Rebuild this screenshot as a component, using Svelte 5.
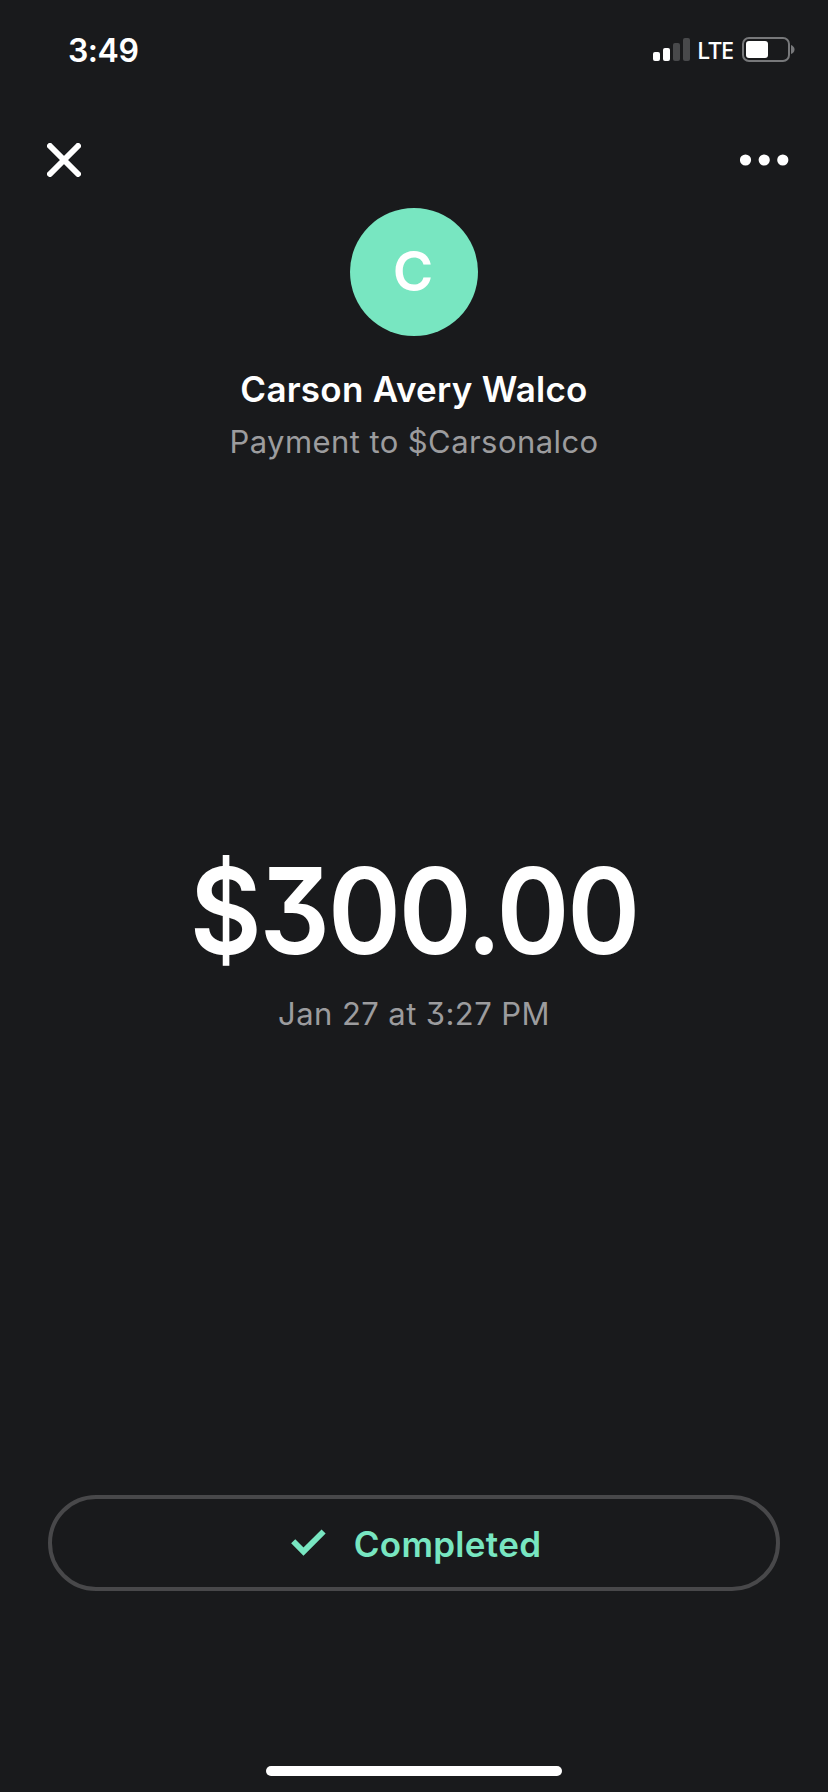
<script lang="ts">
	const status = { time: '3:49', network: 'LTE', battery: 0.55 };

	const payment = {
		name: 'Carson Avery Walco',
		detail: 'Payment to $Carsonalco',
		amount: '$300.00',
		date: 'Jan 27 at 3:27 PM',
		state: 'Completed'
	};

	const bars = [
		{ height: 9, active: true },
		{ height: 13, active: true },
		{ height: 18, active: false },
		{ height: 23, active: false }
	];

	let initial = $derived(payment.name.charAt(0));
</script>

<div class="screen">
	<div class="status-bar">
		<span class="time">{status.time}</span>
		<div class="indicators">
			<div class="signal">
				{#each bars as bar}
					<span class="bar" class:active={bar.active} style="height: {bar.height}px"></span>
				{/each}
			</div>
			<span class="network">{status.network}</span>
			<div class="battery">
				<div class="cell">
					<div class="charge" style="width: {status.battery * 100}%"></div>
				</div>
				<svg width="4" height="9" viewBox="0 0 4 9" aria-hidden="true">
					<path d="M0 0Q3.5 1.5 3.5 4.5T0 9Z" fill="#77787a" />
				</svg>
			</div>
		</div>
	</div>

	<nav>
		<button aria-label="Close">
			<svg width="34" height="34" viewBox="0 0 34 34">
				<path d="M3 3L31 31M31 3L3 31" fill="none" stroke="#fff" stroke-width="6" stroke-linecap="round" />
			</svg>
		</button>
		<button aria-label="More options">
			<svg width="49" height="12" viewBox="0 0 49 12" fill="#fff">
				<circle cx="5.5" cy="6" r="5.6" />
				<circle cx="24.2" cy="6" r="5.6" />
				<circle cx="42.8" cy="6" r="5.6" />
			</svg>
		</button>
	</nav>

	<header class="profile">
		<div class="avatar">{initial}</div>
		<h1>{payment.name}</h1>
		<p>{payment.detail}</p>
	</header>

	<main>
		<div class="amount">{payment.amount}</div>
		<p class="date">{payment.date}</p>
	</main>

	<footer>
		<div class="state">
			<svg width="36" height="28" viewBox="0 0 36 28" aria-hidden="true">
				<path d="M2.2 12.3L12.5 22.6L32.6 2.5" fill="none" stroke="#78e6c1" stroke-width="5.8" />
			</svg>
			<span>{payment.state}</span>
		</div>
		<div class="home-indicator"></div>
	</footer>
</div>

<style>
	:global(body) {
		margin: 0;
		background: #191a1c;
	}

	.screen {
		display: flex;
		flex-direction: column;
		box-sizing: border-box;
		width: 828px;
		height: 1792px;
		overflow: hidden;
		background: #191a1c;
		color: #fff;
		font-family: Inter, 'Open Sans', sans-serif;
	}

	.status-bar {
		display: flex;
		align-items: center;
		justify-content: space-between;
		height: 99px;
		padding: 0 33px 0 68px;
	}

	.time {
		padding-top: 1px;
		font-size: 32px;
		font-weight: 600;
		letter-spacing: -0.5px;
	}

	.indicators {
		display: flex;
		align-items: center;
	}

	.signal {
		display: flex;
		align-items: flex-end;
		gap: 3px;
		height: 23px;
	}

	.bar {
		width: 7px;
		border-radius: 2px;
		background: #48494b;
	}

	.bar.active {
		background: #fff;
	}

	.network {
		margin: 1px 9px 0 7px;
		font-family: 'Noto Sans', sans-serif;
		font-size: 24px;
		font-weight: 500;
		line-height: 24px;
		letter-spacing: -1.1px;
	}

	.battery {
		display: flex;
		align-items: center;
		gap: 1px;
	}

	.cell {
		box-sizing: border-box;
		width: 48px;
		height: 25px;
		padding: 2px;
		border: 2px solid #77787a;
		border-radius: 7px;
	}

	.charge {
		height: 17px;
		border-radius: 3px;
		background: #fff;
	}

	nav {
		display: flex;
		align-items: center;
		justify-content: space-between;
		padding: 44px 39px 0 47px;
	}

	button {
		display: flex;
		padding: 0;
		border: 0;
		background: none;
	}

	.profile {
		display: flex;
		flex-direction: column;
		align-items: center;
		margin-top: 31px;
	}

	.avatar {
		width: 128px;
		height: 128px;
		border-radius: 50%;
		background: #78e6c1;
		font-size: 55px;
		font-weight: 600;
		line-height: 126px;
		text-align: center;
		text-indent: -2px;
	}

	h1,
	p {
		margin: 0;
		white-space: nowrap;
	}

	h1 {
		margin-top: 31px;
		font-size: 35px;
		font-weight: 600;
		line-height: 44px;
		letter-spacing: 0.25px;
	}

	p {
		color: #9c9c9e;
		font-size: 31px;
		line-height: 40px;
		letter-spacing: 0.42px;
	}

	.profile p {
		margin-top: 11px;
	}

	main {
		display: flex;
		flex: 1;
		flex-direction: column;
		align-items: center;
		padding-top: 379px;
	}

	/* the figures are set slightly condensed */
	.amount {
		font-size: 119px;
		font-weight: 600;
		line-height: 140px;
		letter-spacing: -2.4px;
		font-feature-settings: 'cv09';
		transform: scaleX(0.93);
	}

	.date {
		margin-top: 13px;
		font-feature-settings: 'cv09';
	}

	footer {
		display: flex;
		flex-direction: column;
		align-items: center;
		padding: 0 48px 16px;
	}

	.state {
		display: flex;
		align-items: center;
		justify-content: center;
		gap: 27px;
		box-sizing: border-box;
		width: 100%;
		height: 96px;
		padding-left: 4px;
		border: 4px solid #48484a;
		border-radius: 48px;
		color: #78e6c1;
		font-size: 35px;
		font-weight: 600;
		letter-spacing: 0.3px;
	}

	.state span {
		padding-top: 2px;
	}

	.home-indicator {
		width: 296px;
		height: 10px;
		margin-top: 175px;
		border-radius: 5px;
		background: #fff;
	}
</style>
